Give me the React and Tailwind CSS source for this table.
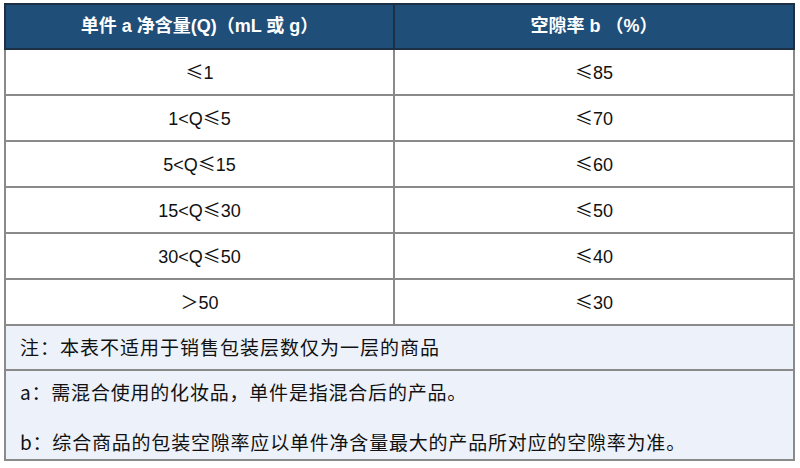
import React from 'react';

const ROWS = [
  ['≤1', '≤85'],
  ['1<Q≤5', '≤70'],
  ['5<Q≤15', '≤60'],
  ['15<Q≤30', '≤50'],
  ['30<Q≤50', '≤40'],
  ['＞50', '≤30'],
];

const latin = { fontFamily: '"Liberation Sans", "Noto Sans CJK SC", sans-serif' };
const cjk = { fontFamily: '"Noto Sans CJK SC", sans-serif' };

// ≤ and ＞ are drawn wide, in the CJK face, like the source table
function Cell({ text }) {
  const parts = text.split(/([≤＞])/);
  return parts.map((p, i) =>
    p === '≤' || p === '＞' ? (
      <span key={i} style={cjk}>{p}</span>
    ) : (
      <span key={i}>{p}</span>
    )
  );
}

export default function App() {
  return (
    <div className="w-[800px] h-[468px] bg-white pt-[3px] pl-[4px]" style={latin}>
      <table className="w-[791px] border-collapse border-2 border-[#7f7f7f] text-[18px] text-[#111]">
        <thead>
          <tr className="h-[45px] bg-[#1f4e79] text-white">
            <th className="w-[389px] border-2 border-[#1c2f44] font-bold text-[18px]">
              单件 a 净含量(Q)（mL 或 g）
            </th>
            <th className="border-2 border-[#1c2f44] font-bold text-[18px]">空隙率 b （%）</th>
          </tr>
        </thead>
        <tbody>
          {ROWS.map(([q, b]) => (
            <tr key={q} className="h-[46px]">
              <td className="border-2 border-[#8a8a8a] text-center">
                <Cell text={q} />
              </td>
              <td className="border-2 border-[#8a8a8a] text-center">
                <Cell text={b} />
              </td>
            </tr>
          ))}
          <tr className="h-[45px] bg-[#edf2fa] text-[19px] tracking-[1px]">
            <td colSpan={2} className="border-2 border-[#8a8a8a] px-[14px]" style={cjk}>
              注：本表不适用于销售包装层数仅为一层的商品
            </td>
          </tr>
          <tr className="bg-[#edf2fa] text-[19px] tracking-[0.8px]">
            <td colSpan={2} className="border-2 border-[#8a8a8a] px-[14px] pt-[6px] pb-[2px] leading-[30px]" style={cjk}>
              <p>a：需混合使用的化妆品，单件是指混合后的产品。</p>
              <p className="mt-[20px]">b：综合商品的包装空隙率应以单件净含量最大的产品所对应的空隙率为准。</p>
            </td>
          </tr>
        </tbody>
      </table>
    </div>
  );
}
